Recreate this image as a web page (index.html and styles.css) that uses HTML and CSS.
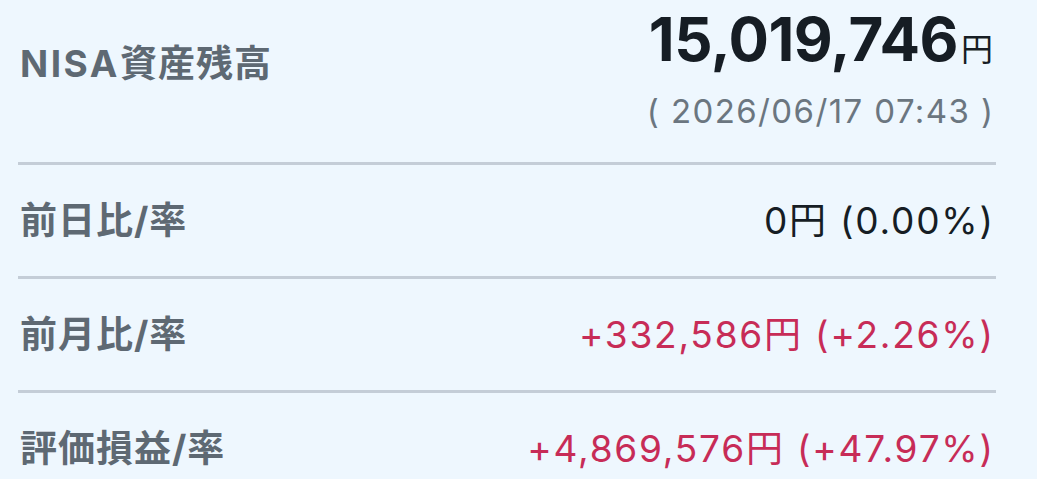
FILE: index.html
```html
<!DOCTYPE html>
<html lang="ja">
<head>
<meta charset="utf-8">
<link rel="stylesheet" href="styles.css">
</head>
<body>
<div class="panel">
  <div class="header">
    <div class="label label-top"><span class="latin">NISA</span>資産残高</div>
    <div class="total">
      <div class="amount"><span class="amount-num">15,019,746</span><span class="amount-yen">円</span></div>
      <div class="stamp">( 2026/06/17 07:43 )</div>
    </div>
  </div>
  <div class="row">
    <div class="label">前日比/率</div>
    <div class="value">0円 (0.00%)</div>
  </div>
  <div class="row">
    <div class="label">前月比/率</div>
    <div class="value up">+332,586円 (+2.26%)</div>
  </div>
  <div class="row last">
    <div class="label">評価損益/率</div>
    <div class="value up">+4,869,576円 (+47.97%)</div>
  </div>
</div>
</body>
</html>
```
FILE: styles.css
```css
html, body {
  margin: 0;
  padding: 0;
  background: #eef7fe;
}
body {
  font-family: "Inter", "Noto Sans CJK JP", sans-serif;
}
.panel {
  height: 479px;
  overflow: hidden;
  padding: 0 41px 0 18px;
}
.header {
  display: flex;
  justify-content: space-between;
  align-items: flex-start;
  height: 162px;
  border-bottom: 3px solid #c4cdd7;
  padding: 0 3px 0 2px;
}
.label {
  font-size: 37px;
  line-height: 1;
  font-weight: 700;
  letter-spacing: 1px;
  color: #5e6973;
}
.label .latin {
  letter-spacing: 2.5px;
}
.label-top {
  padding-top: 45px;
}
.total {
  display: flex;
  flex-direction: column;
  align-items: flex-end;
  padding-top: 9px;
}
.amount {
  line-height: 1;
  color: #161d24;
}
.amount-num {
  font-size: 60px;
  font-weight: 700;
  letter-spacing: -0.5px;
}
.amount-yen {
  font-size: 32px;
  font-weight: 400;
  margin-left: 3px;
}
.stamp {
  margin-top: 26px;
  margin-right: -1.4px;
  font-size: 33px;
  line-height: 1;
  letter-spacing: 1.4px;
  color: #6b7680;
}
.row {
  display: flex;
  justify-content: space-between;
  align-items: center;
  height: 111px;
  border-bottom: 3px solid #c4cdd7;
  padding: 0 3px 0 2px;
}
.row.last {
  border-bottom: none;
}
.value {
  font-size: 37px;
  line-height: 1;
  letter-spacing: 1.8px;
  margin-right: -1.8px;
  color: #161d24;
}
.value.up {
  color: #c72c57;
}
```
